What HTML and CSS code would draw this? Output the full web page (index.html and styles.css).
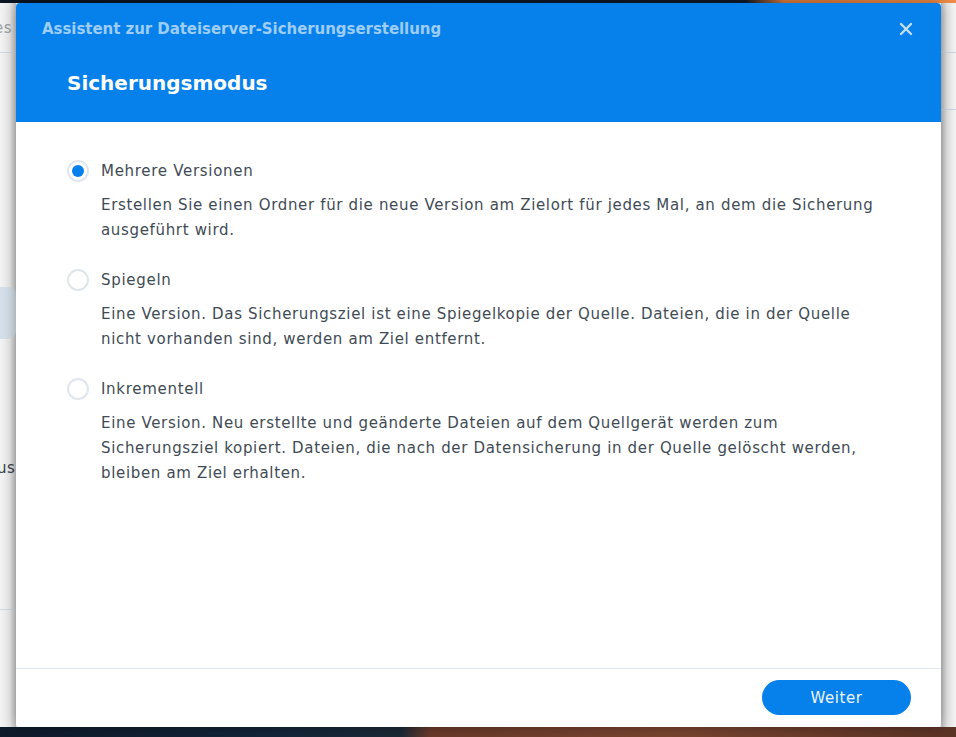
FILE: index.html
```html
<!DOCTYPE html>
<html lang="de">
<head>
<meta charset="utf-8">
<title>Assistent zur Dateiserver-Sicherungserstellung</title>
<link rel="stylesheet" href="styles.css">
</head>
<body>
<div class="desktop">
  <div class="bgwin">
    <div class="bg-left">
      <div class="bg-head"><span class="bg-head-text">es</span></div>
      <div class="bg-selected"></div>
      <div class="bg-label">us</div>
      <div class="bg-line"></div>
    </div>
    <div class="bg-right">
      <div class="bg-rline"></div>
      <div class="bg-rline"></div>
    </div>
  </div>

  <div class="dialog">
    <div class="dlg-header">
      <div class="dlg-topbar">
        <span class="dlg-title">Assistent zur Dateiserver-Sicherungserstellung</span>
        <span class="dlg-close" aria-label="Schließen">
          <svg width="14" height="14" viewBox="0 0 14 14"><path d="M2 2 L12 12 M12 2 L2 12" stroke="currentColor" stroke-width="2.4" stroke-linecap="round"/></svg>
        </span>
      </div>
      <h1 class="dlg-heading">Sicherungsmodus</h1>
    </div>

    <div class="dlg-body">
      <div class="option">
        <div class="opt-row">
          <span class="radio checked"></span>
          <span class="opt-label">Mehrere Versionen</span>
        </div>
        <p class="opt-desc">Erstellen Sie einen Ordner für die neue Version am Zielort für jedes Mal, an dem die Sicherung ausgeführt wird.</p>
      </div>
      <div class="option">
        <div class="opt-row">
          <span class="radio"></span>
          <span class="opt-label">Spiegeln</span>
        </div>
        <p class="opt-desc">Eine Version. Das Sicherungsziel ist eine Spiegelkopie der Quelle. Dateien, die in der Quelle nicht vorhanden sind, werden am Ziel entfernt.</p>
      </div>
      <div class="option">
        <div class="opt-row">
          <span class="radio"></span>
          <span class="opt-label">Inkrementell</span>
        </div>
        <p class="opt-desc">Eine Version. Neu erstellte und geänderte Dateien auf dem Quellgerät werden zum Sicherungsziel kopiert. Dateien, die nach der Datensicherung in der Quelle gelöscht werden, bleiben am Ziel erhalten.</p>
      </div>
    </div>

    <div class="dlg-footer">
      <button class="btn-primary">Weiter</button>
    </div>
  </div>
</div>
</body>
</html>
```

FILE: styles.css
```css
* { box-sizing: border-box; }

html, body {
  margin: 0;
  padding: 0;
  width: 956px;
  height: 737px;
  overflow: hidden;
}

body {
  font-family: "DejaVu Sans", Verdana, sans-serif;
  color: #414b55;
}

.desktop {
  position: relative;
  width: 956px;
  height: 737px;
  background:
    linear-gradient(to right, #0e1a2a 0%, #13263a 30%, #1c2a36 42%, #6a3a2a 45%, #7a4530 70%, #5b3325 100%);
}
.desktop::before {
  content: "";
  position: absolute;
  left: 0; top: 0; right: 0; height: 4px;
  background: linear-gradient(to right, #0b1422 0%, #101a28 78%, #d9793a 82%, #ee8a46 100%);
}

/* window behind the dialog */
.bgwin {
  position: absolute;
  left: 0; top: 3px;
  width: 956px; height: 724px;
  background: #ffffff;
  display: flex;
  justify-content: space-between;
}
.bg-left {
  width: 16px;
  height: 100%;
  background: linear-gradient(to right, #f3f3f3 0%, #eaeaea 60%, #c8c8c8 100%);
  display: flex;
  flex-direction: column;
  overflow: hidden;
}
.bg-head {
  height: 50px;
  border-bottom: 1px solid #cfd8e2;
  display: flex;
  align-items: center;
  flex-shrink: 0;
}
.bg-head-text {
  font-family: "DejaVu Sans", sans-serif;
  font-size: 15px;
  letter-spacing: 0.5px;
  color: #9aa0a6;
  margin-left: -6px;
}
.bg-selected {
  margin-top: 234px;
  height: 52px;
  background: #d4dfe9;
  border-radius: 0 8px 8px 0;
  flex-shrink: 0;
}
.bg-label {
  margin-top: 117px;
  font-size: 15px;
  letter-spacing: 0.6px;
  line-height: 24px;
  color: #3a4047;
  margin-left: -3px;
  white-space: nowrap;
}
.bg-line {
  margin-top: 129px;
  height: 1px;
  background: #d2d7dd;
  flex-shrink: 0;
}
.bg-right {
  width: 15px;
  height: 100%;
  background: linear-gradient(to right, #c4c4c4 0%, #e6e6e6 40%, #f4f4f4 100%);
  padding-top: 49px;
}
.bg-rline {
  height: 1px;
  background: #cdd6e0;
  margin-bottom: 56px;
}

/* dialog */
.dialog {
  position: absolute;
  left: 16px; top: 3px;
  width: 925px; height: 724px;
  background: #ffffff;
  border-radius: 4px;
  overflow: hidden;
  display: flex;
  flex-direction: column;
  box-shadow: 0 0 14px rgba(0, 0, 0, 0.35);
}

.dlg-header {
  height: 119px;
  background: #0680ea;
  flex-shrink: 0;
  padding: 0 26px 0 26px;
}
.dlg-topbar {
  height: 51px;
  display: flex;
  align-items: center;
  justify-content: space-between;
}
.dlg-title {
  font-size: 15px;
  font-weight: bold;
  letter-spacing: -0.05px;
  color: #9dcdf8;
}
.dlg-close {
  color: #c2def8;
  display: flex;
  margin-right: 2px;
}
.dlg-heading {
  margin: 9px 0 0 25px;
  font-size: 20px;
  font-weight: bold;
  color: #ffffff;
  line-height: 40px;
}

.dlg-body {
  flex: 1;
  padding: 37px 56px 0 51px;
}
.option { margin-bottom: 25px; }
.opt-row {
  display: flex;
  align-items: center;
  height: 24px;
}
.radio {
  width: 22px;
  height: 22px;
  border-radius: 50%;
  border: 2px solid #dfe6ee;
  background: #fff;
  flex-shrink: 0;
  position: relative;
}
.radio.checked::after {
  content: "";
  position: absolute;
  left: 3px; top: 3px;
  width: 12px; height: 12px;
  border-radius: 50%;
  background: #0680ea;
}
.opt-label {
  margin-left: 12px;
  font-size: 15px;
  letter-spacing: 0.7px;
  line-height: 24px;
}
.opt-desc {
  margin: 10px 0 0 34px;
  font-size: 15px;
  letter-spacing: 0.66px;
  line-height: 25px;
}

.dlg-footer {
  flex-shrink: 0;
  border-top: 1px solid #e2e8ee;
  height: 59px;
  display: flex;
  justify-content: flex-end;
  align-items: flex-start;
  padding: 11px 30px 0 0;
}
.btn-primary {
  width: 149px;
  height: 35px;
  border: none;
  border-radius: 18px;
  background: #0680ea;
  color: #eef6ff;
  font-family: "DejaVu Sans", sans-serif;
  font-size: 15px;
  letter-spacing: 0.6px;
  padding: 0;
}
```
